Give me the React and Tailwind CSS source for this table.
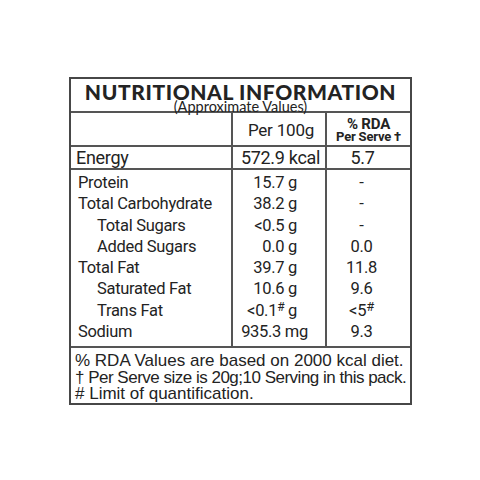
const narrow = { fontFamily: '"Liberation Sans Narrow", Roboto, sans-serif' };

const Hash = ({ size = 'text-[12px]' }) => (
  <span className={`${size} align-top leading-[14px]`}>#</span>
);

const rows = [
  { label: 'Protein', value: '15.7 g', rda: '-' },
  { label: 'Total Carbohydrate', value: '38.2 g', rda: '-' },
  { label: 'Total Sugars', value: '<0.5 g', rda: '-', indent: true },
  { label: 'Added Sugars', value: '0.0 g', rda: '0.0', indent: true },
  { label: 'Total Fat', value: '39.7 g', rda: '11.8' },
  { label: 'Saturated Fat', value: '10.6 g', rda: '9.6', indent: true },
  { label: 'Trans Fat', value: <>{'<0.1'}<Hash /> g</>, rda: <>{'<5'}<Hash size="text-[13px]" /></>, indent: true },
  { label: 'Sodium', value: '935.3 mg', rda: '9.3', wide: true },
];

export default function App() {
  return (
    <div className="min-h-screen bg-white pt-[77px] pl-[69px] text-[#232323]">
      <div className="w-[343px] border-2 border-[#474747] box-border">
        {/* Title */}
        <div className="h-[34px] flex flex-col items-center border-b-2 border-[#555]" style={{ fontFamily: 'Lato, sans-serif' }}>
          <div className="text-[21px] font-black leading-[17px] mt-[4px] tracking-[0.6px]">
            NUTRITIONAL INFORMATION
          </div>
          <div className="text-[14.5px] leading-[12px] mt-[1px]">(Approximate Values)</div>
        </div>

        {/* Header */}
        <div className="grid grid-cols-[162px_94px_1fr] h-[34px] border-b-2 border-[#555]" style={narrow}>
          <div className="border-r-2 border-[#555]"></div>
          <div className="border-r-2 border-[#555] flex items-center justify-center pl-[4px] pt-[3px] text-[17px] tracking-[-0.2px]">Per 100g</div>
          <div className="flex flex-col items-center justify-center font-bold pt-[2px] tracking-[-0.2px]">
            <span className="text-[15px] leading-[12px]">% RDA</span>
            <span className="text-[13px] leading-[13px]">Per Serve †</span>
          </div>
        </div>

        {/* Energy */}
        <div className="grid grid-cols-[162px_94px_1fr] h-[23px] border-b-2 border-[#555] text-[18px] leading-[22px] tracking-[-0.3px]" style={narrow}>
          <div className="border-r-2 border-[#555] pl-[5px]">Energy</div>
          <div className="border-r-2 border-[#555] text-center pl-[3px]">572.9 kcal</div>
          <div className="text-center pr-[12px]">5.7</div>
        </div>

        {/* Body */}
        <div className="grid grid-cols-[162px_94px_1fr] border-b-2 border-[#555] text-[16.5px] leading-[21.3px] tracking-[-0.3px]" style={narrow}>
          <div className="border-r-2 border-[#555] pl-[7px] pt-[2px] pb-[4px]">
            {rows.map((r, i) => (
              <div key={i} className={r.indent ? 'pl-[19px]' : ''}>{r.label}</div>
            ))}
          </div>
          <div className="border-r-2 border-[#555] pt-[2px] pb-[4px]">
            {rows.map((r, i) => (
              <div key={i} className={r.wide ? 'text-right pr-[17px]' : 'text-right pr-[28px]'}>{r.value}</div>
            ))}
          </div>
          <div className="pt-[2px] pb-[4px]">
            {rows.map((r, i) => (
              <div key={i} className="text-center pr-[14px]">{r.rda}</div>
            ))}
          </div>
        </div>

        {/* Footer */}
        <div className="h-[55px] pl-[4px] pt-[5px] text-[17px] leading-[16.5px] whitespace-nowrap" style={{ fontFamily: '"Liberation Sans", Arial, sans-serif' }}>
          <div>% RDA Values are based on 2000 kcal diet.</div>
          <div className="tracking-[-0.5px]">† Per Serve size is 20g;10 Serving in this pack.</div>
          <div># Limit of quantification.</div>
        </div>
      </div>
    </div>
  );
}
